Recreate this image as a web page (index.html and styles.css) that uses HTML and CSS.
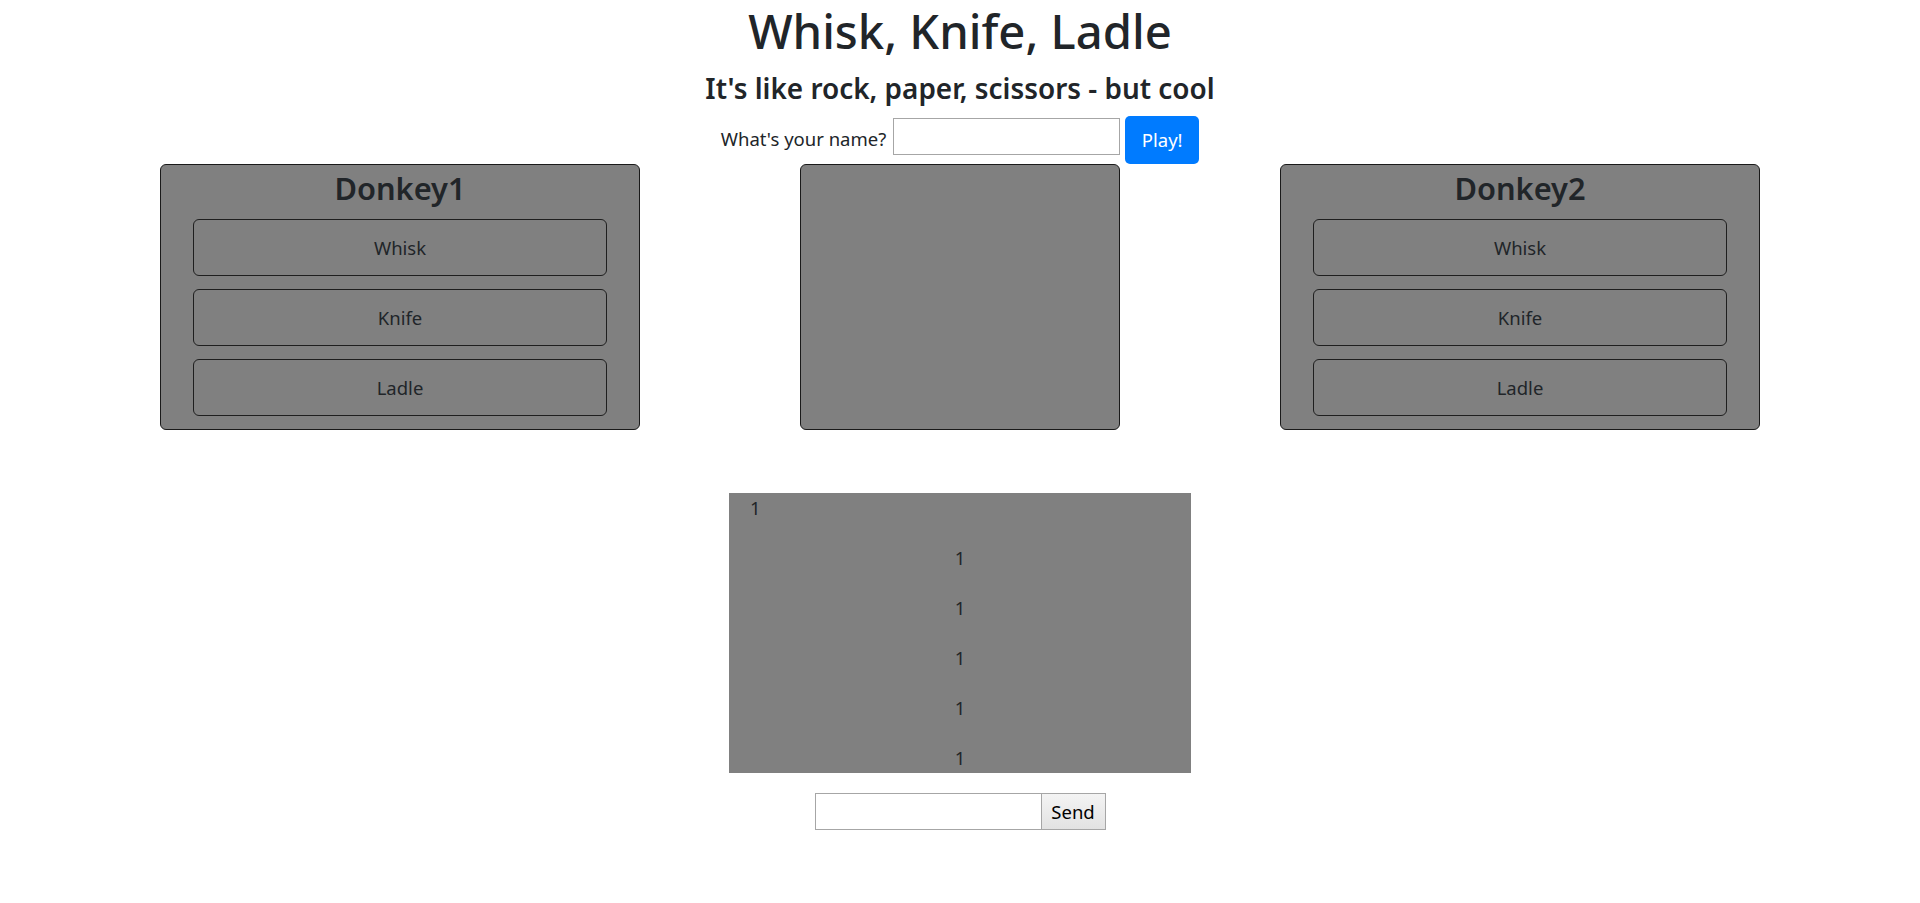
FILE: index.html
```html
<!DOCTYPE html>
<html lang="en">
<head>
<meta charset="utf-8">
<title>Whisk, Knife, Ladle</title>
<link rel="stylesheet" href="styles.css">
</head>
<body>
<header class="header">
  <h1 class="title">Whisk, Knife, Ladle</h1>
  <h4 class="subtitle">It's like rock, paper, scissors - but cool</h4>
  <div class="join">
    <label class="join-label" for="name">What's your name?</label>
    <input class="join-input" id="name" type="text">
    <button class="play-btn" type="button">Play!</button>
  </div>
</header>
<main>
  <section class="arena">
    <div class="card card-left">
      <h3 class="player-name">Donkey1</h3>
      <button class="choice" type="button">Whisk</button>
      <button class="choice" type="button">Knife</button>
      <button class="choice" type="button">Ladle</button>
    </div>
    <div class="card card-center"></div>
    <div class="card card-right">
      <h3 class="player-name">Donkey2</h3>
      <button class="choice" type="button">Whisk</button>
      <button class="choice" type="button">Knife</button>
      <button class="choice" type="button">Ladle</button>
    </div>
  </section>
  <section class="chat">
    <div class="messages">
      <p class="msg msg-first">1</p>
      <p class="msg">1</p>
      <p class="msg">1</p>
      <p class="msg">1</p>
      <p class="msg">1</p>
      <p class="msg msg-last">1</p>
    </div>
    <div class="send-row">
      <input class="send-input" type="text">
      <button class="send-btn" type="button">Send</button>
    </div>
  </section>
</main>
</body>
</html>
```
FILE: styles.css
```css
html, body {
  margin: 0;
  padding: 0;
  background: #fff;
}
body {
  font-family: "Noto Sans", "Open Sans", sans-serif;
  font-size: 18.5px;
  line-height: 30px;
  color: #212529;
  text-align: center;
}
.title {
  margin: 0 0 10px;
  padding-top: 2px;
  height: 58px;
  font-size: 47.2px;
  font-weight: 500;
  line-height: 58px;
}
.subtitle {
  margin: 0 0 10px;
  font-size: 27.9px;
  font-weight: 600;
  line-height: 36px;
}
.join {
  display: flex;
  justify-content: center;
  align-items: flex-start;
  height: 48px;
}
.join-label {
  margin-top: 8px;
  margin-right: 7px;
}
.join-input {
  box-sizing: border-box;
  width: 227px;
  height: 37px;
  margin: 2px 5px 0 0;
  border: 1px solid #a6a6a6;
  padding: 0 4px;
  font: inherit;
}
.play-btn {
  box-sizing: border-box;
  width: 74px;
  height: 48px;
  border: none;
  border-radius: 5px;
  background: #007bff;
  color: #fff;
  font: inherit;
  padding: 0;
}
.arena {
  display: grid;
  grid-template-columns: repeat(12, 1fr);
}
.card {
  box-sizing: border-box;
  height: 266px;
  border: 1px solid #1a1a1a;
  border-radius: 6px;
  background: #808080;
  display: flex;
  flex-direction: column;
  align-items: center;
  padding: 2px 32px 13px;
  gap: 13px;
}
.card-left { grid-column: 2 / 5; }
.card-center { grid-column: 6 / 8; }
.card-right { grid-column: 9 / 12; }
.player-name {
  margin: 0 0 -3px;
  font-size: 30.8px;
  font-weight: 600;
  line-height: 42px;
}
.choice {
  box-sizing: border-box;
  width: 100%;
  height: 57px;
  border: 1px solid #1f1f1f;
  border-radius: 6px;
  background: transparent;
  color: #212529;
  font: inherit;
  padding: 0;
}
.chat {
  margin-top: 63px;
}
.messages {
  width: 462px;
  margin: 0 auto;
  background: #808080;
}
.msg {
  margin: 0 0 20px;
  line-height: 30px;
}
.msg-first {
  text-align: left;
  padding-left: 21px;
}
.msg-last {
  margin-bottom: 0;
}
.send-row {
  display: flex;
  justify-content: center;
  margin-top: 20px;
}
.send-input {
  box-sizing: border-box;
  width: 226px;
  height: 37px;
  border: 1px solid #a6a6a6;
  border-right: none;
  padding: 0 4px;
  font: inherit;
}
.send-btn {
  box-sizing: border-box;
  width: 65px;
  height: 37px;
  border: 1px solid #a6a6a6;
  background: linear-gradient(#f4f4f4, #e2e2e2);
  color: #000;
  font: inherit;
  padding: 0;
}
```
